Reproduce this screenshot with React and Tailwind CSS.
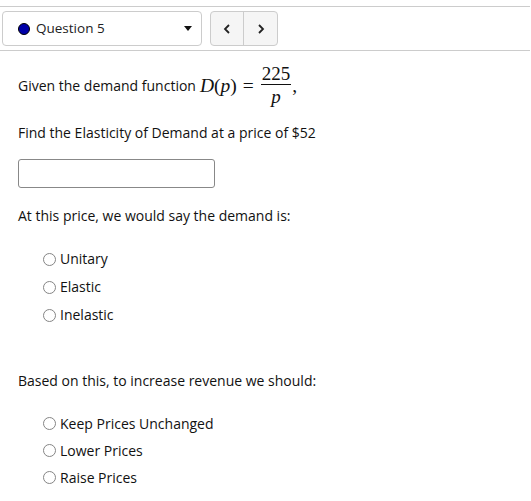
import React from 'react';

const Radio = ({ label, h }) => (
  <label className={`flex items-center ${h}`}>
    <span className="w-[13px] h-[13px] rounded-full border border-[#858585] bg-white mr-[4px]" />
    <span className="leading-[16px]">{label}</span>
  </label>
);

export default function App() {
  return (
    <div className="w-[531px] h-[501px] bg-white text-[14px] text-[#111]" style={{ fontFamily: '"Open Sans", "Liberation Sans", sans-serif' }}>
      {/* question nav bar */}
      <div className="pt-[6px]">
        <div className="border-t border-[#cccccc] w-[530px]" />
        <div className="flex items-center h-[43px] pl-[2px]">
          <div className="flex items-center w-[200px] h-[35px] border border-[#cccccc] rounded-[4px] pl-[15px] pr-[9px]">
            <span className="w-[12px] h-[12px] rounded-full bg-[#0000a8] border border-black mr-[6px]" />
            <span className="text-[13.5px] text-[#222]">Question 5</span>
            <span className="ml-auto w-0 h-0 border-l-[4px] border-r-[4px] border-t-[5px] border-l-transparent border-r-transparent border-t-[#111]" />
          </div>
          <div className="flex ml-[8px] h-[35px] border border-[#cccccc] rounded-[4px] bg-[#f5f5f5]">
            <div className="w-[33px] flex items-center justify-center border-r border-[#cccccc]">
              <svg width="8" height="10" viewBox="0 0 8 10"><path d="M6 1 L2 5 L6 9" fill="none" stroke="#222" strokeWidth="1.8" /></svg>
            </div>
            <div className="w-[33px] flex items-center justify-center">
              <svg width="8" height="10" viewBox="0 0 8 10"><path d="M2 1 L6 5 L2 9" fill="none" stroke="#222" strokeWidth="1.8" /></svg>
            </div>
          </div>
        </div>
        <div className="border-t border-[#cccccc] w-[530px]" />
      </div>

      {/* body */}
      <div className="pl-[18px]">
        <div className="flex items-center mt-[12px] h-[46px]">
          <span className="leading-[16px] mr-[4px]">Given the demand function</span>
          <span className="flex items-center text-[19.5px]" style={{ fontFamily: '"Liberation Serif", serif' }}>
            <span className="italic">D</span>
            <span>(</span>
            <span className="italic">p</span>
            <span>)</span>
            <span className="mx-[6px]">=</span>
            <span className="flex flex-col items-center mx-[1px]">
              <span className="text-[19px] leading-[21px] px-[1px]">225</span>
              <span className="w-full border-t border-[#111]" />
              <span className="italic text-[19px] leading-[24px]">p</span>
            </span>
            <span>,</span>
          </span>
        </div>
        <p className="mt-[16px] leading-[16px]">Find the Elasticity of Demand at a price of $52</p>
        <div className="mt-[18px] w-[197px] h-[29px] border border-[#888] rounded-[3px]" />
        <p className="mt-[20px] leading-[16px]">At this price, we would say the demand is:</p>
        <div className="mt-[21px] pl-[25px]">
          <Radio label="Unitary" h="h-[28px]" />
          <Radio label="Elastic" h="h-[28px]" />
          <Radio label="Inelastic" h="h-[28px]" />
        </div>
        <p className="mt-[44px] leading-[16px]">Based on this, to increase revenue we should:</p>
        <div className="mt-[21px] pl-[25px]">
          <Radio label="Keep Prices Unchanged" h="h-[27px]" />
          <Radio label="Lower Prices" h="h-[27px]" />
          <Radio label="Raise Prices" h="h-[27px]" />
        </div>
      </div>
    </div>
  );
}
